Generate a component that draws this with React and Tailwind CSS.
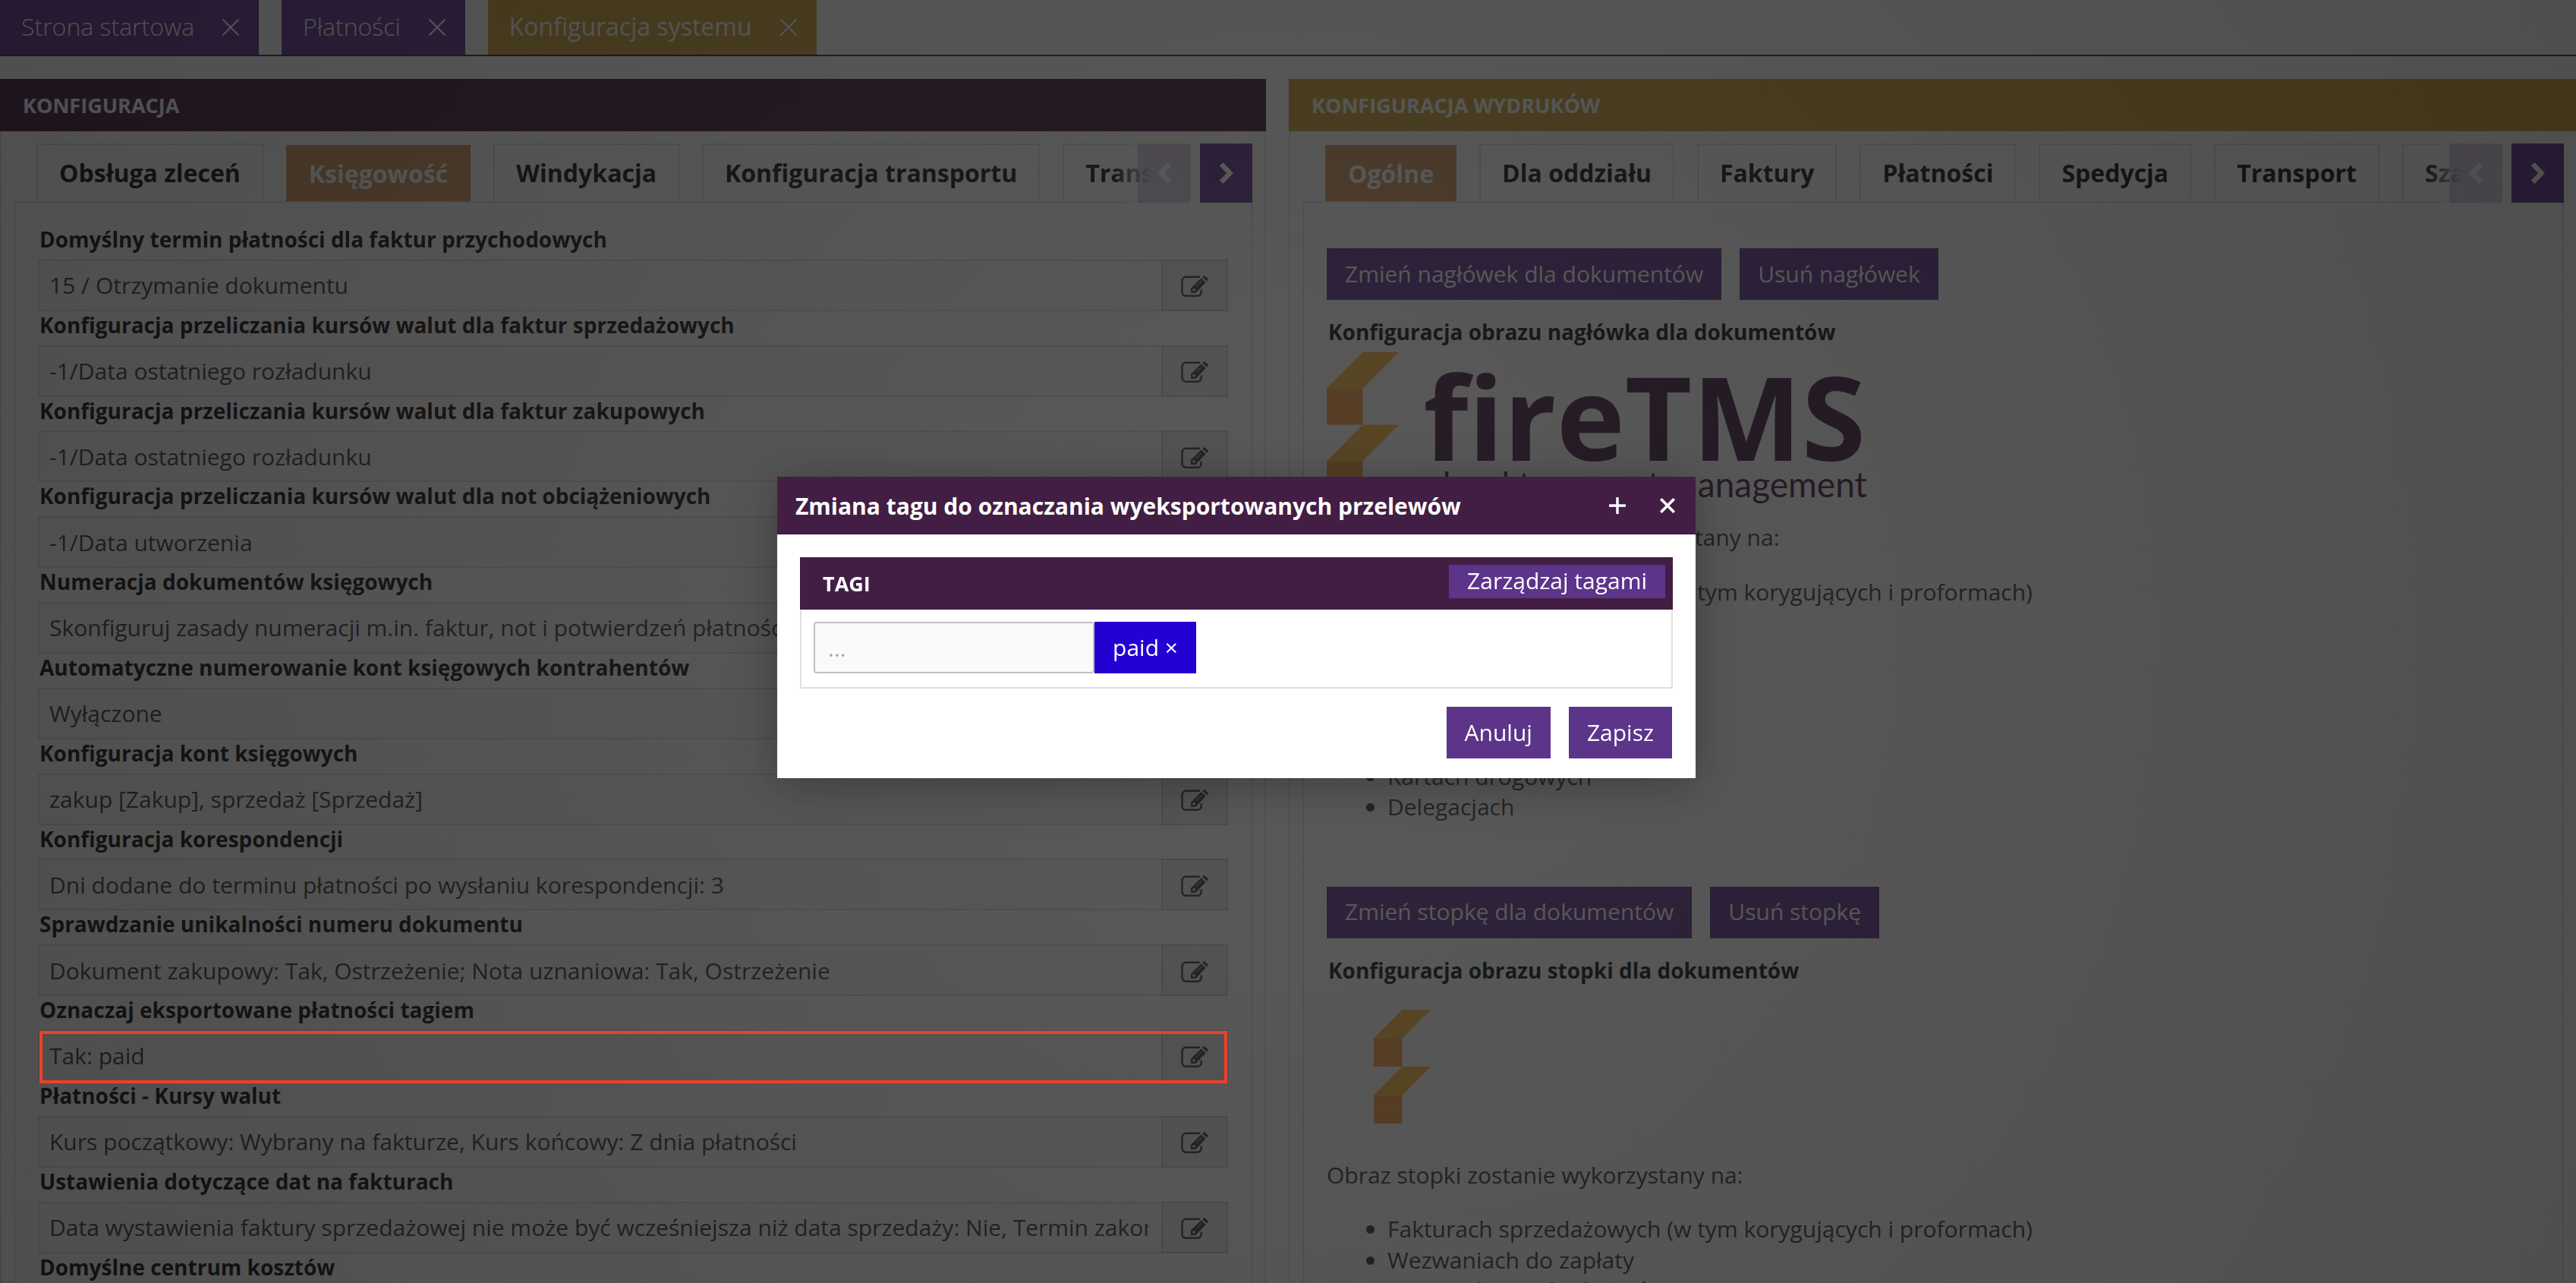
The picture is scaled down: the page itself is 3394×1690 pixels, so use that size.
const openTabs = [
  { label: "Strona startowa", className: "bg-[#5c348a] font-light" },
  { label: "Płatności", className: "bg-[#5c348a] font-light" },
  { label: "Konfiguracja systemu", className: "bg-[#cc9e33] font-normal" },
];

const settingsTabs = [
  "Obsługa zleceń",
  "Księgowość",
  "Windykacja",
  "Konfiguracja transportu",
  "Transport",
];

const printTabs = [
  "Ogólne",
  "Dla oddziału",
  "Faktury",
  "Płatności",
  "Spedycja",
  "Transport",
  "Szablony",
];

const settings = [
  {
    label: "Domyślny termin płatności dla faktur przychodowych",
    value: "15 / Otrzymanie dokumentu",
  },
  {
    label: "Konfiguracja przeliczania kursów walut dla faktur sprzedażowych",
    value: "-1/Data ostatniego rozładunku",
  },
  {
    label: "Konfiguracja przeliczania kursów walut dla faktur zakupowych",
    value: "-1/Data ostatniego rozładunku",
  },
  {
    label: "Konfiguracja przeliczania kursów walut dla not obciążeniowych",
    value: "-1/Data utworzenia",
  },
  {
    label: "Numeracja dokumentów księgowych",
    value:
      "Skonfiguruj zasady numeracji m.in. faktur, not i potwierdzeń płatności",
  },
  {
    label: "Automatyczne numerowanie kont księgowych kontrahentów",
    value: "Wyłączone",
  },
  {
    label: "Konfiguracja kont księgowych",
    value: "zakup [Zakup], sprzedaż [Sprzedaż]",
  },
  {
    label: "Konfiguracja korespondencji",
    value: "Dni dodane do terminu płatności po wysłaniu korespondencji: 3",
  },
  {
    label: "Sprawdzanie unikalności numeru dokumentu",
    value: "Dokument zakupowy: Tak, Ostrzeżenie; Nota uznaniowa: Tak, Ostrzeżenie",
  },
  {
    label: "Oznaczaj eksportowane płatności tagiem",
    value: "Tak: paid",
    highlighted: true,
  },
  {
    label: "Płatności - Kursy walut",
    value: "Kurs początkowy: Wybrany na fakturze, Kurs końcowy: Z dnia płatności",
  },
  {
    label: "Ustawienia dotyczące dat na fakturach",
    value:
      "Data wystawienia faktury sprzedażowej nie może być wcześniejsza niż data sprzedaży: Nie, Termin zakończenia",
  },
  { label: "Domyślne centrum kosztów", value: "" },
];

const documents = [
  "Fakturach sprzedażowych (w tym korygujących i proformach)",
  "Wezwaniach do zapłaty",
  "Potwierdzeniach płatności",
  "Notach obciążeniowych",
  "Notach odsetkowych",
  "Zleceniach transportowych",
  "Kartach drogowych",
  "Delegacjach",
];

const CloseIcon = ({ className, strokeWidth }) => (
  <svg
    viewBox="0 0 24 24"
    className={className}
    fill="none"
    stroke="currentColor"
    strokeWidth={strokeWidth}
  >
    <path d="M1.5 1.5 22.5 22.5M22.5 1.5 1.5 22.5" />
  </svg>
);

const EditIcon = () => (
  <svg viewBox="0 0 36 29" className="mt-1 h-[29px] w-9 text-[#3a3a3a]">
    <path
      d="M24 1.8H6.5A5 5 0 0 0 1.5 6.8V21.8A5 5 0 0 0 6.5 26.8H21.8A5 5 0 0 0 26.8 21.8V19.5"
      fill="none"
      stroke="currentColor"
      strokeWidth="2.4"
      strokeLinecap="round"
    />
    <path
      d="M13 16.8 26.7 3.2 32.6 9.1 19.2 23H13Z"
      fill="currentColor"
    />
    <path
      d="M28.2 1.9 29.4.7Q30.6-.4 31.8.7L35.2 4Q36.3 5.2 35.2 6.4L34 7.6Z"
      fill="currentColor"
    />
    <path
      d="M20.3 14.3 27 7.6"
      stroke="#e6e6e6"
      strokeWidth="1"
      strokeLinecap="round"
    />
    <circle cx="17" cy="18.9" r="1.8" fill="#e6e6e6" />
  </svg>
);

const Chevron = ({ left }) => (
  <svg
    viewBox="0 0 18 28"
    className={left ? "h-7 w-[18px] rotate-180" : "h-7 w-[18px]"}
    fill="none"
    stroke="white"
    strokeWidth="6.4"
  >
    <path d="M2.2 2.2 13.6 14 2.2 25.8" />
  </svg>
);

const FlameMark = ({ className }) => (
  <svg viewBox="0 0 96 192" preserveAspectRatio="none" className={className}>
    <path d="M48 0H96L48 48H0ZM48 96H96L48 144H0Z" fill="#f9b739" />
    <path d="M0 48H48V96H0ZM0 144H48V192H0Z" fill="#f59a41" />
  </svg>
);

const Button = ({ children, className = "h-[68px] pb-0.5" }) => (
  <button
    type="button"
    className={`bg-[#5c348a] px-6 text-[30px] text-white ${className}`}
  >
    {children}
  </button>
);

const TabStrip = ({ tabs, active }) => (
  <div className="relative flex h-[78px]">
    <div className="flex min-w-0 flex-1 gap-[30px] overflow-hidden border-b-2 border-[#e1dfe0] pl-[30px]">
      {tabs.map((tab) =>
        tab === active ? (
          <div
            key={tab}
            className="mt-0.5 -mb-0.5 flex h-[76px] shrink-0 items-center bg-[#d29558] px-[30px] text-[32px] font-bold text-white"
          >
            {tab}
          </div>
        ) : (
          <div
            key={tab}
            className="flex h-[76px] shrink-0 items-center border-2 border-b-0 border-[#e1dfe0] px-7 text-[32px] font-bold text-[#101010]"
          >
            {tab}
          </div>
        )
      )}
    </div>

    <div className="absolute top-0 right-0 flex h-[78px]">
      <div className="w-8 bg-linear-to-r from-white/0 to-white/60" />
      <div className="bg-linear-to-r from-white/60 to-white to-25%">
        <button
          type="button"
          className="mr-3 flex h-[78px] w-[70px] items-center justify-center bg-[#5c348a]/22"
        >
          <Chevron left />
        </button>
      </div>
      <button
        type="button"
        className="flex h-[78px] w-[69px] items-center justify-center bg-[#5c348a]"
      >
        <Chevron />
      </button>
    </div>
  </div>
);

const SettingRow = ({ label, value, highlighted }) => (
  <div className="relative">
    <div className="h-[44.8px] pl-0.5 text-[28px] leading-9 font-bold text-[#101010]">
      {label}
    </div>
    <div className="flex h-[68px]">
      <div className="flex min-w-0 flex-1 items-center border-2 border-r-0 border-[#e1dfe0] bg-[#fafafa] pr-[17px] pl-[13px]">
        <div className="overflow-hidden text-[30px] whitespace-nowrap text-[#3c3c3c]">
          {value}
        </div>
      </div>
      <button
        type="button"
        className="flex w-[88px] items-center justify-center border-2 border-[#cccccc] bg-[#eaeaea]"
      >
        <EditIcon />
      </button>
    </div>
    {highlighted && (
      <div className="absolute top-[46px] right-px left-0.5 z-20 h-[69px] border-4 border-[#ec4128]" />
    )}
  </div>
);

const DocumentList = ({ intro }) => (
  <div className="text-[30px] leading-[40.5px] text-[#3c3c3c]">
    <p>{intro}</p>
    <ul className="mt-[31px] list-disc pl-20">
      {documents.map((name) => (
        <li key={name}>{name}</li>
      ))}
    </ul>
  </div>
);

const TagDialog = () => (
  <div className="fixed top-[628px] left-[1024px] z-30 w-[1210px] bg-white shadow-[0_8px_60px_rgba(0,0,0,0.3)]">
    <div className="flex h-[76px] items-center bg-[#421e44] pl-6 text-white">
      <h2 className="flex-1 text-[30px] font-bold">
        Zmiana tagu do oznaczania wyeksportowanych przelewów
      </h2>
      <svg
        viewBox="0 0 22 22"
        className="mr-[45px] h-[22px] w-[22px]"
        stroke="currentColor"
        strokeWidth="3.4"
      >
        <path d="M11 0V22M0 11H22" />
      </svg>
      <CloseIcon className="mr-[27px] h-5 w-5" strokeWidth="4.4" />
    </div>

    <div className="px-[30px] pt-[30px] pb-[26px]">
      <div className="flex h-[69px] items-center bg-[#421e44] pr-2.5 pl-[30px]">
        <h3 className="flex-1 pt-0.5 text-[27px] font-bold text-white">TAGI</h3>
        <Button className="mb-[5px] h-11 pb-[3px] leading-10">
          Zarządzaj tagami
        </Button>
      </div>
      <div className="flex h-[104px] border-2 border-t-0 border-[#e2dfe1] px-4 pt-4 text-[30px]">
        <input
          placeholder="..."
          className="h-[68px] w-[370px] rounded border-2 border-[#bfbfbf] bg-[#fafafa] px-[17px] placeholder:text-[#a8a8a8]"
        />
        <span className="flex h-[68px] w-[134px] items-center justify-center bg-[#2500d2] pb-0.5 text-white">
          paid ×
        </span>
      </div>
      <div className="mt-6 flex justify-end gap-6 pr-px">
        <Button>Anuluj</Button>
        <Button>Zapisz</Button>
      </div>
    </div>
  </div>
);

const App = () => {
  return (
    <div className="relative h-[1690px] w-[3394px] overflow-hidden bg-white font-['Open_Sans','Noto_Sans',sans-serif]">
      <nav className="flex h-[74px] gap-[30px] border-b-2 border-[#421e44]">
        {openTabs.map((tab) => (
          <div
            key={tab.label}
            className={`flex items-center pr-[25px] pl-7 text-[32px] text-white ${tab.className}`}
          >
            <span className="pb-[3px]">{tab.label}</span>
            <CloseIcon className="ml-9 h-6 w-6" strokeWidth="2.2" />
          </div>
        ))}
      </nav>

      <main className="mt-[30px] flex h-[1620px] gap-[30px]">
        <section className="w-[1668px]">
          <h1 className="flex h-[69px] items-center bg-[#421e44] pt-px pl-[30px] text-[27px] font-bold text-white">
            KONFIGURACJA
          </h1>
          <div className="h-full border-x-2 border-[#e1dfe0] px-4 pt-4">
            <TabStrip tabs={settingsTabs} active="Księgowość" />
            <div className="h-full border-x-2 border-[#e1dfe0] px-[30px] pt-[30px]">
              {settings.map((item) => (
                <SettingRow key={item.label} {...item} />
              ))}
            </div>
          </div>
        </section>

        <section className="w-[1696px]">
          <h1 className="flex h-[69px] items-center bg-[#cc9e33] pt-px pl-[30px] text-[27px] font-bold text-white">
            KONFIGURACJA WYDRUKÓW
          </h1>
          <div className="h-full border-l-2 border-[#e1dfe0] px-4 pt-4">
            <TabStrip tabs={printTabs} active="Ogólne" />
            <div className="h-full border-x-2 border-[#e1dfe0] px-[30px] pt-[60px]">
              <div className="flex gap-6">
                <Button>Zmień nagłówek dla dokumentów</Button>
                <Button>Usuń nagłówek</Button>
              </div>
              <h2 className="mt-6 pl-0.5 text-[28px] leading-9 font-bold text-[#101010]">
                Konfiguracja obrazu nagłówka dla dokumentów
              </h2>
              <div className="mt-[9px] flex h-[224px]">
                <FlameMark className="h-[191px] w-[95px]" />
                <div className="w-[617px] text-right text-[#421e44]">
                  <div className="pt-2 pr-0.5 text-[153px] leading-[151px] font-bold">
                    fireTMS
                  </div>
                  <div className="-mt-[11px] font-['Lato'] text-[46px] leading-[52px] whitespace-nowrap">
                    cloud transport management
                  </div>
                </div>
              </div>
              <DocumentList intro="Obraz nagłówka zostanie wykorzystany na:" />

              <div className="mt-[84px] flex gap-6">
                <Button>Zmień stopkę dla dokumentów</Button>
                <Button>Usuń stopkę</Button>
              </div>
              <h2 className="mt-6 pl-0.5 text-[28px] leading-9 font-bold text-[#101010]">
                Konfiguracja obrazu stopki dla dokumentów
              </h2>
              <FlameMark className="mt-[34px] mb-12 ml-[62px] h-[150px] w-[75px]" />
              <DocumentList intro="Obraz stopki zostanie wykorzystany na:" />
            </div>
          </div>
        </section>
      </main>

      <div className="fixed inset-0 z-10 bg-[radial-gradient(circle_at_center,rgba(32,32,32,0.74),rgba(17,17,17,0.74))]" />
      <TagDialog />
    </div>
  );
};

export default App;
